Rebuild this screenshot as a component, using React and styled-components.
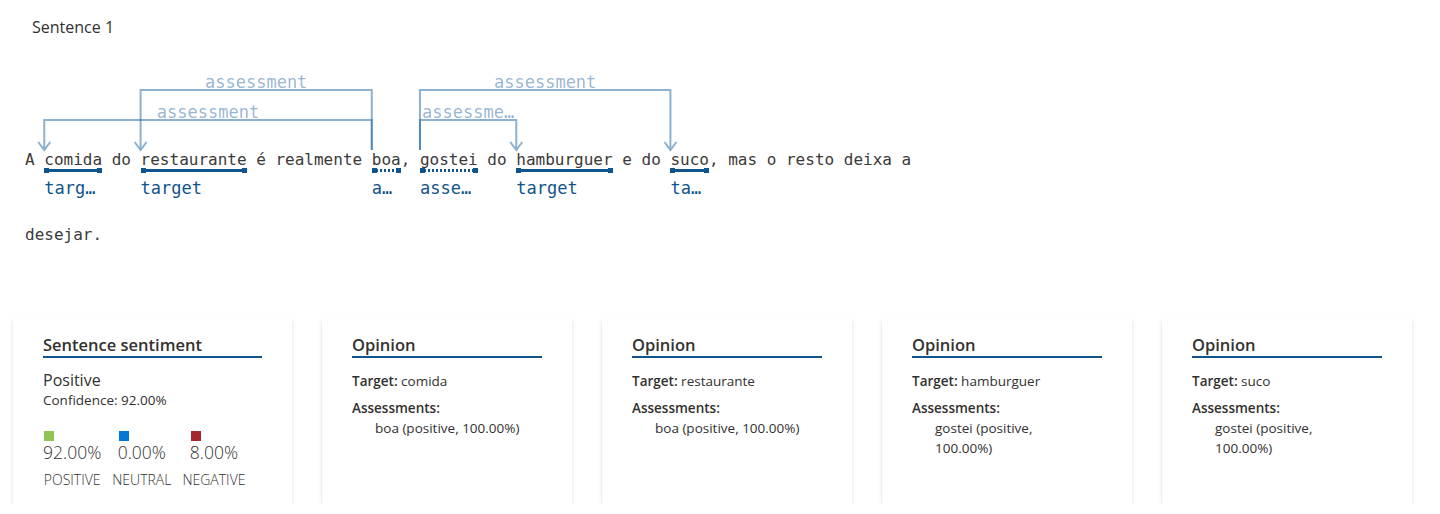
import React from "react"
import styled, { createGlobalStyle } from "styled-components"

const MONO = `"DejaVu Sans Mono", "Liberation Mono", monospace`
const UI = `"Open Sans", "Noto Sans", sans-serif`
const WORD_PX = 16
const LABEL_PX = 17
const CHAR_W = WORD_PX * 0.60205
const LABEL_CHAR_W = LABEL_PX * 0.60205
const TEXT_LEFT = 25
const ARC_SPACE = 100

const GlobalStyle = createGlobalStyle`
  body {
    margin: 0;
    background: #ffffff;
    font-family: ${UI};
    color: #323130;
  }
`

const Page = styled.div`
  display: flex;
  flex-direction: column;
`

const Heading = styled.div`
  padding: 17px 0 13px 32px;
  font-size: 16px;
  line-height: 20px;
  color: #323130;
`

const Visual = styled.div`
  position: relative;
  display: flex;
  flex-direction: column;
  gap: 26px;
  padding: ${ARC_SPACE}px 0 0 ${TEXT_LEFT}px;
  font-family: ${MONO};
  font-size: ${WORD_PX}px;
  color: #3b3a39;
`

const ArcLayer = styled.svg`
  position: absolute;
  top: 0;
  left: 0;
  width: 100%;
  height: ${ARC_SPACE}px;
  overflow: visible;
  pointer-events: none;
`

const Line = styled.div`
  display: flex;
  align-items: flex-start;
`

const Plain = styled.span`
  white-space: pre;
  line-height: 20px;
`

const Token = styled.span`
  display: flex;
  flex-direction: column;
  width: ${p => p.$len}ch;
`

const Word = styled.span`
  line-height: 20px;
  white-space: pre;
`

const Underline = styled.span`
  position: relative;
  height: 3px;
  margin-top: -1px;
  background: ${p =>
    p.$dotted
      ? "repeating-linear-gradient(90deg, #0f548c 0 2px, transparent 2px 4px)"
      : "#0f548c"};

  &::before,
  &::after {
    content: "";
    position: absolute;
    top: -1px;
    width: 5px;
    height: 5px;
    background: #0f548c;
  }
  &::before { left: 0; }
  &::after { right: 0; }
`

const TagLabel = styled.span`
  margin-top: 5px;
  font-size: ${LABEL_PX}px;
  line-height: 22px;
  color: #0f548c;
  white-space: nowrap;
  overflow: hidden;
  text-overflow: ellipsis;
`

const Cards = styled.div`
  display: flex;
  gap: 30px;
  padding: 73px 0 0 13px;
`

const Card = styled.div`
  box-sizing: border-box;
  width: ${p => p.$width}px;
  height: 186px;
  padding: 16px 30px 0;
  background: #ffffff;
  box-shadow: 0 1.6px 3.6px rgba(0, 0, 0, 0.14), 0 0.3px 0.9px rgba(0, 0, 0, 0.12);
`

const CardTitle = styled.div`
  font-size: 16.5px;
  font-weight: 600;
  line-height: 22px;
  color: #323130;
  border-bottom: 2px solid #0f548c;
`

const Sentiment = styled.div`
  margin-top: 11px;
  font-size: 16px;
  line-height: 22px;
`

const Confidence = styled.div`
  font-size: 13.5px;
  line-height: 18px;
`

const Legend = styled.div`
  display: flex;
  gap: 11px;
  margin-top: 22px;
`

const LegendCol = styled.div`
  display: flex;
  flex-direction: column;
  align-items: center;
`

const LegendValue = styled.div`
  display: flex;
  flex-direction: column;
  align-items: flex-start;
`

const Swatch = styled.span`
  width: 10px;
  height: 10px;
  margin-left: 1px;
  background: ${p => p.$color};
`

const Percent = styled.span`
  font-size: 17.5px;
  font-weight: 300;
  line-height: 22px;
  color: #323130;
`

const LegendLabel = styled.span`
  margin-top: 8px;
  font-size: 14px;
  font-weight: 300;
  line-height: 18px;
  color: #323130;
`

const Field = styled.div`
  margin-top: ${p => p.$gap}px;
  font-size: 13.5px;
  line-height: 20px;
`

const FieldName = styled.span`
  font-weight: 600;
`

const Assessment = styled.div`
  padding-left: 23px;
  max-width: 152px;
  font-size: 13.5px;
  line-height: 20px;
`

const lines = [
  [
    { t: "A " },
    { t: "comida", kind: "target" },
    { t: " do " },
    { t: "restaurante", kind: "target" },
    { t: " é realmente " },
    { t: "boa", kind: "assessment" },
    { t: ", " },
    { t: "gostei", kind: "assessment" },
    { t: " do " },
    { t: "hamburguer", kind: "target" },
    { t: " e do " },
    { t: "suco", kind: "target" },
    { t: ", mas o resto deixa a" },
  ],
  [{ t: "desejar." }],
]

const arcs = [
  { from: "boa", to: "restaurante", y: 40 },
  { from: "boa", to: "comida", y: 70 },
  { from: "gostei", to: "suco", y: 40 },
  { from: "gostei", to: "hamburguer", y: 70 },
]

const starts = {}
lines[0].reduce((idx, seg) => {
  if (seg.kind) starts[seg.t] = TEXT_LEFT + idx * CHAR_W
  return idx + seg.t.length
}, 0)

const fit = (text, width) => {
  const max = Math.floor(width / LABEL_CHAR_W)
  return text.length > max ? text.slice(0, max - 1) + "…" : text
}

const ARC_COLOR = "rgba(28, 100, 162, 0.5)"

const Arc = ({ from, to, y }) => {
  const sx = starts[from]
  const tx = starts[to]
  const tip = ARC_SPACE
  return (
    <g>
      <path
        d={`M${sx},${tip} V${y} H${tx} V${tip} M${tx - 6},${tip - 8} L${tx},${tip} L${tx + 6},${tip - 8}`}
        fill="none"
        stroke={ARC_COLOR}
        strokeWidth="2"
      />
      <text
        x={(sx + tx) / 2}
        y={y - 2}
        textAnchor="middle"
        fontFamily={MONO}
        fontSize={LABEL_PX}
        fill="rgba(28, 100, 162, 0.48)"
      >
        {fit("assessment", Math.abs(tx - sx))}
      </text>
    </g>
  )
}

const Segment = ({ seg }) =>
  seg.kind ? (
    <Token $len={seg.t.length}>
      <Word>{seg.t}</Word>
      <Underline $dotted={seg.kind === "assessment"} />
      <TagLabel>{seg.kind}</TagLabel>
    </Token>
  ) : (
    <Plain>{seg.t}</Plain>
  )

const opinions = [
  { target: "comida", assessment: "boa (positive, 100.00%)" },
  { target: "restaurante", assessment: "boa (positive, 100.00%)" },
  { target: "hamburguer", assessment: "gostei (positive, 100.00%)" },
  { target: "suco", assessment: "gostei (positive, 100.00%)" },
]

const scores = [
  { value: "92.00%", label: "POSITIVE", color: "#92c353" },
  { value: "0.00%", label: "NEUTRAL", color: "#0078d4" },
  { value: "8.00%", label: "NEGATIVE", color: "#a4262c" },
]

export default function App() {
  return (
    <Page>
      <GlobalStyle />
      <Heading>Sentence 1</Heading>
      <Visual>
        <ArcLayer>
          {arcs.map(a => (
            <Arc key={a.from + a.to} {...a} />
          ))}
        </ArcLayer>
        {lines.map((line, i) => (
          <Line key={i}>
            {line.map((seg, j) => (
              <Segment key={j} seg={seg} />
            ))}
          </Line>
        ))}
      </Visual>
      <Cards>
        <Card $width={279}>
          <CardTitle>Sentence sentiment</CardTitle>
          <Sentiment>Positive</Sentiment>
          <Confidence>Confidence: 92.00%</Confidence>
          <Legend>
            {scores.map(s => (
              <LegendCol key={s.label}>
                <LegendValue>
                  <Swatch $color={s.color} />
                  <Percent>{s.value}</Percent>
                </LegendValue>
                <LegendLabel>{s.label}</LegendLabel>
              </LegendCol>
            ))}
          </Legend>
        </Card>
        {opinions.map(o => (
          <Card $width={250} key={o.target}>
            <CardTitle>Opinion</CardTitle>
            <Field $gap={13}>
              <FieldName>Target:</FieldName> {o.target}
            </Field>
            <Field $gap={7}>
              <FieldName>Assessments:</FieldName>
            </Field>
            <Assessment>{o.assessment}</Assessment>
          </Card>
        ))}
      </Cards>
    </Page>
  )
}
